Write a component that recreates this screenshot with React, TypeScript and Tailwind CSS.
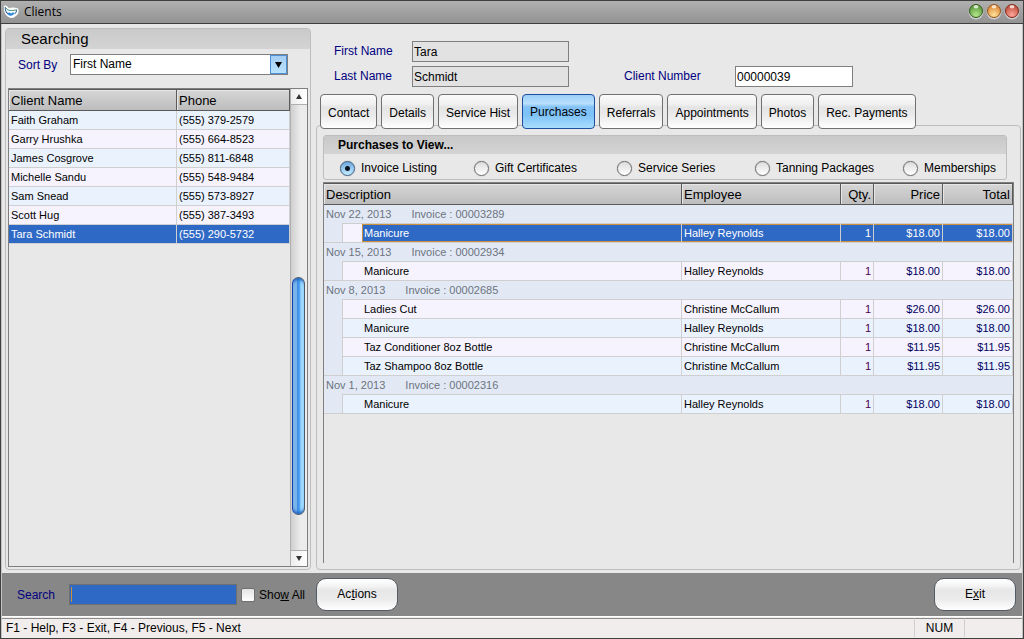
import { useState } from "react";
import clsx from "clsx";

const clients = [
  { name: "Faith Graham", phone: "(555) 379-2579" },
  { name: "Garry Hrushka", phone: "(555) 664-8523" },
  { name: "James Cosgrove", phone: "(555) 811-6848" },
  { name: "Michelle Sandu", phone: "(555) 548-9484" },
  { name: "Sam Snead", phone: "(555) 573-8927" },
  { name: "Scott Hug", phone: "(555) 387-3493" },
  { name: "Tara Schmidt", phone: "(555) 290-5732" },
];

const tabs = [
  "Contact",
  "Details",
  "Service Hist",
  "Purchases",
  "Referrals",
  "Appointments",
  "Photos",
  "Rec. Payments",
];

const views = [
  { label: "Invoice Listing", width: "w-[134px]" },
  { label: "Gift Certificates", width: "w-[143px]" },
  { label: "Service Series", width: "w-[138px]" },
  { label: "Tanning Packages", width: "w-[148px]" },
  { label: "Memberships", width: "w-[98px]" },
];

const invoices = [
  {
    date: "Nov 22, 2013",
    number: "00003289",
    items: [
      { description: "Manicure", employee: "Halley Reynolds", price: "$18.00", tint: "bg-[#f6f3fe]" },
    ],
  },
  {
    date: "Nov 15, 2013",
    number: "00002934",
    items: [
      { description: "Manicure", employee: "Halley Reynolds", price: "$18.00", tint: "bg-[#f6f3fe]" },
    ],
  },
  {
    date: "Nov 8, 2013",
    number: "00002685",
    items: [
      { description: "Ladies Cut", employee: "Christine McCallum", price: "$26.00", tint: "bg-[#f6f3fe]" },
      { description: "Manicure", employee: "Halley Reynolds", price: "$18.00", tint: "bg-[#eaf2fe]" },
      { description: "Taz Conditioner 8oz Bottle", employee: "Christine McCallum", price: "$11.95", tint: "bg-[#f6f3fe]" },
      { description: "Taz Shampoo 8oz Bottle", employee: "Christine McCallum", price: "$11.95", tint: "bg-[#eaf2fe]" },
    ],
  },
  {
    date: "Nov 1, 2013",
    number: "00002316",
    items: [
      { description: "Manicure", employee: "Halley Reynolds", price: "$18.00", tint: "bg-[#eaf2fe]" },
    ],
  },
];

const headCell =
  "h-[22px] border-y border-r border-[#5a5a5a] bg-linear-to-b from-[#d6d6d6] to-[#bdbdbd] px-[2px] pt-px pb-0 text-[13px] leading-[19px] font-normal shadow-[inset_1px_1px_0_#e6e6e6]";

function AppIcon() {
  return (
    <svg width="16" height="14" viewBox="0 0 16 14" aria-hidden="true">
      <path
        d="M2.4 2 L5.4 4.6 Q10 3.6 14 4.6 Q14.6 8 12.4 9.4 Q9.6 12.4 6.6 11 Q2 8.6 2.4 2Z"
        fill="#fff"
        stroke="#fff"
        strokeWidth="3"
        strokeLinejoin="round"
      />
      <path d="M2.2 2.2 L4.8 5 Q9 6.4 13.6 4.8" fill="none" stroke="#4a8f7c" strokeWidth="1" />
      <path d="M2.2 2.2 Q2 6.4 5 9 M13.6 4.8 Q13.8 7.6 11.6 9" fill="none" stroke="#3c6f9c" strokeWidth="1.1" />
      <path d="M4.4 8.4 Q6.4 6.6 8 8.4 Q9.6 6.8 11.4 7.8 Q10.4 11 7 10.8 Q5 10.2 4.4 8.4Z" fill="#2a86d8" />
    </svg>
  );
}

function Orb({ id, label, rim, top, glow }: { id: string; label: string; rim: string; top: string; glow: string }) {
  return (
    <button type="button" aria-label={label} className="size-4">
      <svg width="16" height="16" viewBox="0 0 16 16" aria-hidden="true">
        <defs>
          <radialGradient id={id} cx="0.5" cy="0.8" r="0.7">
            <stop offset="0" stopColor={glow} />
            <stop offset="1" stopColor={top} />
          </radialGradient>
        </defs>
        <circle cx="8" cy="8" r="7.4" fill="#cdcdcd" />
        <circle cx="8" cy="7" r="6.5" fill={`url(#${id})`} stroke={rim} />
        <ellipse cx="8" cy="2.8" rx="2.4" ry="1.8" fill="#fff" opacity="0.75" />
      </svg>
    </button>
  );
}

function ScrollArrow({ down = false }: { down?: boolean }) {
  return (
    <button
      type="button"
      aria-label={down ? "Scroll down" : "Scroll up"}
      className={clsx(
        "flex h-4 w-full items-center justify-center border-[#b0b0b0] bg-linear-to-r from-[#ededed] to-white",
        down ? "border-t" : "border-b",
      )}
    >
      <svg width="6" height="5" viewBox="0 0 6 5" aria-hidden="true">
        <path d={down ? "M0 0H6L3 5Z" : "M0 5H6L3 0Z"} fill="#333" />
      </svg>
    </button>
  );
}

function TitleBar() {
  return (
    <header className="flex h-[23px] items-center border-b border-[#3f3f3f] bg-linear-to-b from-[#b0b0b0] to-[#929292] pr-[3px] pl-[2px]">
      <AppIcon />
      <h1 className="ml-[5px] flex-1 font-['Open_Sans',sans-serif] text-[12px] leading-[20px]">Clients</h1>
      <div className="flex gap-[2px]">
        <Orb id="orb-min" label="Minimize" rim="#35571f" top="#5c9a3c" glow="#b4e68c" />
        <Orb id="orb-max" label="Maximize" rim="#93521d" top="#dd8a3a" glow="#ffe29a" />
        <Orb id="orb-close" label="Close" rim="#7d2a20" top="#c04f3c" glow="#ffa79c" />
      </div>
    </header>
  );
}

function ClientSearch() {
  const [selected, setSelected] = useState("Tara Schmidt");

  return (
    <aside className="flex w-[306px] shrink-0 flex-col rounded-[4px] border border-[#bdbdbd] pb-[2px]">
      <h2 className="h-[20px] rounded-t-[3px] bg-linear-to-b from-[#cacaca] to-[#d4d4d4] pl-[15px] text-[15px] leading-[20px]">
        Searching
      </h2>
      <div className="mt-[5px] flex items-center pl-3">
        <label htmlFor="sort" className="w-[52px] text-[12px] text-[#000080]">
          Sort By
        </label>
        <div className="relative w-[218px]">
          <select
            id="sort"
            className="block h-[21px] w-full appearance-none border border-[#7f7f7f] bg-white pl-[2px] text-[12px] leading-[19px]"
          >
            <option>First Name</option>
            <option>Last Name</option>
          </select>
          <span className="pointer-events-none absolute top-px right-px flex h-[19px] w-[17px] items-center justify-center border border-[#4c8fd6] bg-linear-to-b from-[#a5cdf2] to-[#b9e2fc]">
            <svg width="7" height="6" viewBox="0 0 7 6" aria-hidden="true">
              <path d="M0 0H7L3.5 6Z" />
            </svg>
          </span>
        </div>
      </div>

      <div className="mx-[2px] mt-[13px] flex flex-1 border border-[#7f7f7f]">
        <div className="flex-1">
          <table className="w-full table-fixed border-separate border-spacing-0 text-left">
            <colgroup>
              <col />
              <col className="w-[113px]" />
            </colgroup>
            <thead>
              <tr>
                <th className={headCell}>Client Name</th>
                <th className={headCell}>Phone</th>
              </tr>
            </thead>
            <tbody className="text-[11px] leading-[18px]">
              {clients.map((client, index) => (
                <tr
                  key={client.name}
                  onClick={() => setSelected(client.name)}
                  className={clsx(
                    client.name === selected
                      ? "bg-[#2f69c6] text-white"
                      : index % 2 === 0
                        ? "bg-[#eaf2fe]"
                        : "bg-[#f6f3fe]",
                  )}
                >
                  <td className="border-r border-b border-[#cfcfcf] px-[2px] py-0">{client.name}</td>
                  <td className="border-r border-b border-[#cfcfcf] px-[2px] py-0">{client.phone}</td>
                </tr>
              ))}
            </tbody>
          </table>
        </div>
        <div className="flex w-[17px] flex-col border-l border-[#b0b0b0] bg-linear-to-r from-[#cfcfcf] to-[#ececec] to-60%">
          <ScrollArrow />
          <div className="flex flex-1 flex-col pr-[2px] pl-px">
            <div className="grow-[173]" />
            <div className="grow-[237] rounded-full border border-[#4b5a6a] border-l-[#1440b0] bg-[linear-gradient(to_right,#80b8ea_0%,#74b0e8_38%,#2f86e6_42%,#55a5f2_60%,#98d4fd_72%,#a4defc_100%)] shadow-[inset_0_4px_3px_-2px_#2468c8,inset_0_-4px_3px_-2px_#2468c8]" />
            <div className="grow-[35]" />
          </div>
          <ScrollArrow down />
        </div>
      </div>
    </aside>
  );
}

function InvoiceTable() {
  const amount = "border-t border-r border-[#cfcfcf] px-[2px] py-0 text-right";

  return (
    <div className="flex-1 border-x border-t border-[#7f7f7f]">
      <table className="w-full table-fixed border-separate border-spacing-0 text-left">
        <colgroup>
          <col className="w-[19px]" />
          <col />
          <col className="w-[159px]" />
          <col className="w-[33px]" />
          <col className="w-[69px]" />
          <col className="w-[70px]" />
        </colgroup>
        <thead>
          <tr>
            <th colSpan={2} className={headCell}>Description</th>
            <th className={headCell}>Employee</th>
            <th className={clsx(headCell, "text-right")}>Qty.</th>
            <th className={clsx(headCell, "text-right")}>Price</th>
            <th className={clsx(headCell, "text-right")}>Total</th>
          </tr>
        </thead>
        {invoices.map((invoice, group) => (
          <tbody key={invoice.number} className="text-[11px] leading-[18px]">
            <tr className="bg-[#e2e9f5] text-[#6c7480]">
              <td colSpan={6} className={clsx("border-[#cfcfcf] px-[2px] py-0", group > 0 && "border-t")}>
                {invoice.date}
                <span className="ml-5">Invoice : {invoice.number}</span>
              </td>
            </tr>
            {invoice.items.map((item) => {
              const active = group === 0;
              const fill = active ? "bg-[#2f69c6] text-white shadow-[inset_0_1px_0_#c98f3c,inset_0_-1px_0_#c98f3c]" : item.tint;
              return (
                <tr key={item.description}>
                  <td className="border-r border-[#cfcfcf] bg-[#e2e9f5] p-0" />
                  <td className={clsx("border-t border-r border-[#cfcfcf] p-0", item.tint)}>
                    <div
                      className={clsx(
                        "ml-[19px] pl-[2px]",
                        active && "bg-[#2f69c6] text-white shadow-[inset_1px_1px_0_#c98f3c,inset_0_-1px_0_#c98f3c]",
                      )}
                    >
                      {item.description}
                    </div>
                  </td>
                  <td className={clsx("border-t border-r border-[#cfcfcf] px-[2px] py-0", fill)}>{item.employee}</td>
                  <td className={clsx(amount, fill, !active && "text-[#4b0050]")}>1</td>
                  <td className={clsx(amount, fill, !active && "text-[#000060]")}>{item.price}</td>
                  <td className={clsx(amount, fill, !active && "text-[#000060]")}>{item.price}</td>
                </tr>
              );
            })}
          </tbody>
        ))}
        <tfoot>
          <tr>
            <td colSpan={6} className="h-px bg-[#cfcfcf] p-0" />
          </tr>
        </tfoot>
      </table>
    </div>
  );
}

function ClientDetails() {
  const [tab, setTab] = useState("Purchases");
  const label = "text-[12px] leading-[20px] text-[#000080]";
  const field = "h-[21px] border border-[#7f7f7f] px-px text-[12px]";

  return (
    <main className="flex min-w-0 flex-1 flex-col pt-[13px]">
      <div className="grid grid-cols-[78px_157px_55px_111px_118px] gap-y-1 pl-[18px]">
        <label htmlFor="first" className={label}>First Name</label>
        <input id="first" readOnly defaultValue="Tara" className={clsx(field, "bg-[#e2e2e2]")} />
        <label htmlFor="last" className={clsx(label, "col-start-1")}>Last Name</label>
        <input id="last" readOnly defaultValue="Schmidt" className={clsx(field, "bg-[#e2e2e2]")} />
        <label htmlFor="number" className={clsx(label, "col-start-4")}>Client Number</label>
        <input id="number" defaultValue="00000039" className={clsx(field, "bg-white")} />
      </div>

      <div role="tablist" className="relative z-10 mt-[7px] -mb-1 flex gap-1 pl-1">
        {tabs.map((name) => (
          <button
            key={name}
            type="button"
            role="tab"
            aria-selected={name === tab}
            onClick={() => setTab(name)}
            className={clsx(
              "h-[35px] rounded-[4px] border px-[7px] text-[12px] whitespace-nowrap",
              name === tab
                ? "border-[#1f4fa0] bg-[linear-gradient(#9ccff8_0%,#b9e0fc_26%,#84c2f6_36%,#7cc2f8_60%,#a9ddfd_100%)]"
                : "border-[#707070] bg-[linear-gradient(#fbfbfb_0%,#f0f0f0_28%,#e4e4e4_38%,#ececec_65%,#ffffff_100%)] pt-[2px]",
            )}
          >
            {name}
          </button>
        ))}
      </div>

      <section className="flex flex-1 flex-col rounded-[4px] border border-[#bdbdbd] pt-[9px] pr-[6px] pb-[6px] pl-[6px]">
        <fieldset className="mr-[7px] h-[45px] rounded-[3px] border border-[#bdbdbd]">
          <legend className="float-left h-[18px] w-full bg-linear-to-b from-[#c8c8c8] to-[#d4d4d4] pl-[14px] text-[12px] leading-[18px] font-bold">
            Purchases to View...
          </legend>
          <div className="clear-both flex pt-[6px] pl-4">
            {views.map((view, index) => (
              <label key={view.label} className={clsx("flex items-center gap-[6px] text-[12px] leading-[16px] whitespace-nowrap", view.width)}>
                <input
                  type="radio"
                  name="view"
                  defaultChecked={index === 0}
                  className="size-[15px] shrink-0 appearance-none rounded-full border border-[#6f6f6f] bg-[linear-gradient(#dcdcdc,#ffffff)] shadow-[0_0_1px_#888] checked:border-[#3d5f86] checked:bg-[radial-gradient(circle,#0a1420_0_2px,transparent_3px),linear-gradient(#6ea8e0,#c4ecff)]"
                />
                {view.label}
              </label>
            ))}
          </div>
        </fieldset>
        <div className="mt-[2px] flex flex-1 flex-col">
          <InvoiceTable />
        </div>
      </section>
    </main>
  );
}

function ActionBar() {
  const button =
    "h-[33px] w-[82px] rounded-[10px] border border-[#555b62] bg-[linear-gradient(#ffffff_0%,#f3f3f3_24%,#e6e6e6_36%,#ebebeb_65%,#ffffff_100%)] pb-[2px] text-[12px]";

  return (
    <div className="flex h-[43px] items-center bg-[#878787] pr-[6px] pl-[15px]">
      <label htmlFor="search" className="w-[52px] text-[12px] text-[#000080]">Search</label>
      <div className="flex h-[21px] w-[168px] items-center border border-[#6f6f6f] bg-[#2f69c6] pl-px">
        <input
          id="search"
          className="h-[15px] w-full border-l border-[#c98f3c] bg-transparent text-[12px] text-white outline-none"
        />
      </div>
      <label className="ml-1 flex items-center gap-[4px] text-[12px]">
        <input
          type="checkbox"
          className="size-[14px] appearance-none rounded-[2px] border border-[#707070] bg-linear-to-b from-[#e4e4e4] to-white checked:bg-[#2f69c6]"
        />
        <span>
          Sho<u>w</u> All
        </span>
      </label>
      <button type="button" className={clsx(button, "ml-[11px]")}>
        Ac<u>t</u>ions
      </button>
      <button type="button" className={clsx(button, "ml-auto")}>
        E<u>x</u>it
      </button>
    </div>
  );
}

export default function App() {
  return (
    <div className="flex min-h-screen flex-col border border-[#3f3f3f] bg-[#e8e8e8] font-['Liberation_Sans',Arial,sans-serif] text-black">
      <TitleBar />
      <div className="flex flex-1 flex-col border-x border-[#c4c4c4]">
        <div className="flex flex-1 gap-[5px] pt-[4px] pr-px pb-[3px] pl-[3px]">
          <ClientSearch />
          <ClientDetails />
        </div>
        <ActionBar />
        <footer className="flex border-t border-white bg-[#f1edec] py-px text-[12px] leading-[18px]">
          <p className="flex-1 border-t border-[#8a8a8a] pl-[4px]">F1 - Help, F3 - Exit, F4 - Previous, F5 - Next</p>
          <p className="w-[50px] border-t border-l border-t-[#8a8a8a] border-l-[#cfcfcf] text-center">NUM</p>
          <p className="w-[58px] border-t border-l border-t-[#8a8a8a] border-l-[#cfcfcf]" />
        </footer>
      </div>
    </div>
  );
}
